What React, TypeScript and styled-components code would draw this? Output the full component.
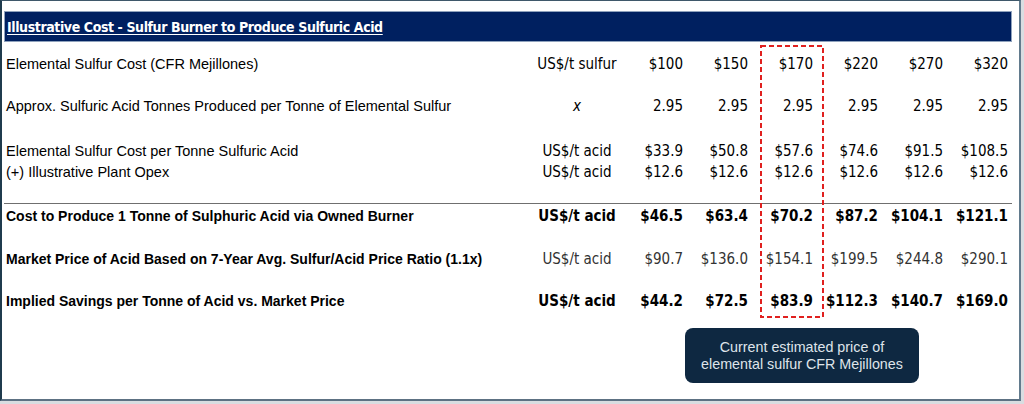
import React from 'react';
import styled, { createGlobalStyle } from 'styled-components';

const GlobalStyle = createGlobalStyle`
  html, body {
    margin: 0;
    padding: 0;
    background: #d9dde1;
  }
  body {
    font-family: "Liberation Sans", Arial, sans-serif;
    color: #000;
  }
`;

interface Row {
  label: string;
  unit: string;
  values: string[];
  bold?: boolean;
  labelOnlyBold?: boolean;
  italicUnit?: boolean;
  height: number;
  gap?: number;
}

const rows: Row[] = [
  {
    label: 'Elemental Sulfur Cost (CFR Mejillones)',
    unit: 'US$/t sulfur',
    values: ['$100', '$150', '$170', '$220', '$270', '$320'],
    height: 44,
  },
  {
    label: 'Approx. Sulfuric Acid Tonnes Produced per Tonne of Elemental Sulfur',
    unit: 'x',
    italicUnit: true,
    values: ['2.95', '2.95', '2.95', '2.95', '2.95', '2.95'],
    height: 40,
  },
  {
    label: 'Elemental Sulfur Cost per Tonne Sulfuric Acid',
    unit: 'US$/t acid',
    values: ['$33.9', '$50.8', '$57.6', '$74.6', '$91.5', '$108.5'],
    height: 21,
    gap: 14,
  },
  {
    label: '(+) Illustrative Plant Opex',
    unit: 'US$/t acid',
    values: ['$12.6', '$12.6', '$12.6', '$12.6', '$12.6', '$12.6'],
    height: 21,
  },
];

const totals: Row[] = [
  {
    label: 'Cost to Produce 1 Tonne of Sulphuric Acid via Owned Burner',
    unit: 'US$/t acid',
    values: ['$46.5', '$63.4', '$70.2', '$87.2', '$104.1', '$121.1'],
    bold: true,
    height: 23,
  },
  {
    label: 'Market Price of Acid Based on 7-Year Avg. Sulfur/Acid Price Ratio (1.1x)',
    unit: 'US$/t acid',
    values: ['$90.7', '$136.0', '$154.1', '$199.5', '$244.8', '$290.1'],
    labelOnlyBold: true,
    height: 63,
  },
  {
    label: 'Implied Savings per Tonne of Acid vs. Market Price',
    unit: 'US$/t acid',
    values: ['$44.2', '$72.5', '$83.9', '$112.3', '$140.7', '$169.0'],
    bold: true,
    height: 21,
  },
];

const Frame = styled.div`
  width: 1021px;
  height: 401px;
  box-sizing: border-box;
  background: #fff;
  border-left: 2px solid #1f3b4d;
  border-top: 1px solid #3f586a;
  border-right: 2px solid #627b8d;
  border-bottom: 2px solid #5d7183;
  padding: 10px 0 0 2px;
  overflow: hidden;
`;

const TitleBar = styled.div`
  width: 1008px;
  height: 31px;
  box-sizing: border-box;
  background: #002060;
  border: 1px solid #8fa2bd;
  display: flex;
  align-items: center;
  padding: 1px 0 0 2px;
`;

const Title = styled.span`
  font-family: "DejaVu Sans Condensed", "Liberation Sans", sans-serif;
  font-weight: 700;
  font-size: 14px;
  letter-spacing: -0.4px;
  color: #fff;
  text-decoration: underline;
  text-underline-offset: 2px;
`;

const Table = styled.div`
  position: relative;
  width: 1015px;
`;

const RowGrid = styled.div<{ $h: number; $gap: number; $bold: boolean }>`
  display: grid;
  grid-template-columns: 521px 104px repeat(6, 65px);
  align-items: center;
  height: ${({ $h }) => $h}px;
  margin-top: ${({ $gap }) => $gap}px;
  font-weight: ${({ $bold }) => ($bold ? 700 : 400)};
`;

const Label = styled.div<{ $bold: boolean }>`
  padding-left: 2px;
  font-size: ${({ $bold }) => ($bold ? 14 : 14.5)}px;
  font-weight: ${({ $bold }) => ($bold ? 700 : 400)};
  white-space: nowrap;
`;

const Unit = styled.div<{ $italic: boolean; $muted: boolean }>`
  font-family: "DejaVu Sans Condensed", "Liberation Sans", sans-serif;
  font-size: 15px;
  text-align: center;
  font-style: ${({ $italic }) => ($italic ? 'italic' : 'normal')};
  color: ${({ $muted }) => ($muted ? '#333' : '#000')};
  white-space: nowrap;
`;

const Value = styled.div<{ $muted: boolean }>`
  font-family: "DejaVu Sans Condensed", "Liberation Sans", sans-serif;
  font-size: 15px;
  text-align: right;
  padding-right: 11px;
  color: ${({ $muted }) => ($muted ? '#333' : '#000')};
  white-space: nowrap;
`;

const Divider = styled.div`
  width: 1008px;
  height: 1px;
  background: #6f6f6f;
  margin-top: 21px;
`;

const Highlight = styled.svg`
  position: absolute;
  left: 756px;
  top: 3px;
  width: 64px;
  height: 273px;
  pointer-events: none;
`;

const Callout = styled.div`
  margin: 17px 0 0 681px;
  width: 234px;
  height: 55px;
  box-sizing: border-box;
  background: #0e2841;
  border-radius: 8px;
  color: #dfe4ea;
  font-size: 14.3px;
  line-height: 17px;
  display: flex;
  align-items: center;
  justify-content: center;
  text-align: center;
`;

const TableRow: React.FC<{ row: Row }> = ({ row }) => {
  const muted = !!row.labelOnlyBold;
  return (
    <RowGrid $h={row.height} $gap={row.gap ?? 0} $bold={!!row.bold}>
      <Label $bold={!!row.bold || !!row.labelOnlyBold}>{row.label}</Label>
      <Unit $italic={!!row.italicUnit} $muted={muted}>{row.unit}</Unit>
      {row.values.map((v, i) => (
        <Value key={i} $muted={muted}>{v}</Value>
      ))}
    </RowGrid>
  );
};

export default function App() {
  return (
    <>
      <GlobalStyle />
      <Frame>
        <TitleBar>
          <Title>Illustrative Cost - Sulfur Burner to Produce Sulfuric Acid</Title>
        </TitleBar>
        <Table>
          {rows.map((r) => (
            <TableRow key={r.label} row={r} />
          ))}
          <Divider />
          {totals.map((r) => (
            <TableRow key={r.label} row={r} />
          ))}
          <Highlight viewBox="0 0 64 273">
            <rect
              x="1"
              y="1"
              width="62"
              height="271"
              fill="none"
              stroke="#e0201f"
              strokeWidth="2"
              strokeDasharray="5 3"
            />
          </Highlight>
        </Table>
        <Callout>
          Current estimated price of
          <br />
          elemental sulfur CFR Mejillones
        </Callout>
      </Frame>
    </>
  );
}
